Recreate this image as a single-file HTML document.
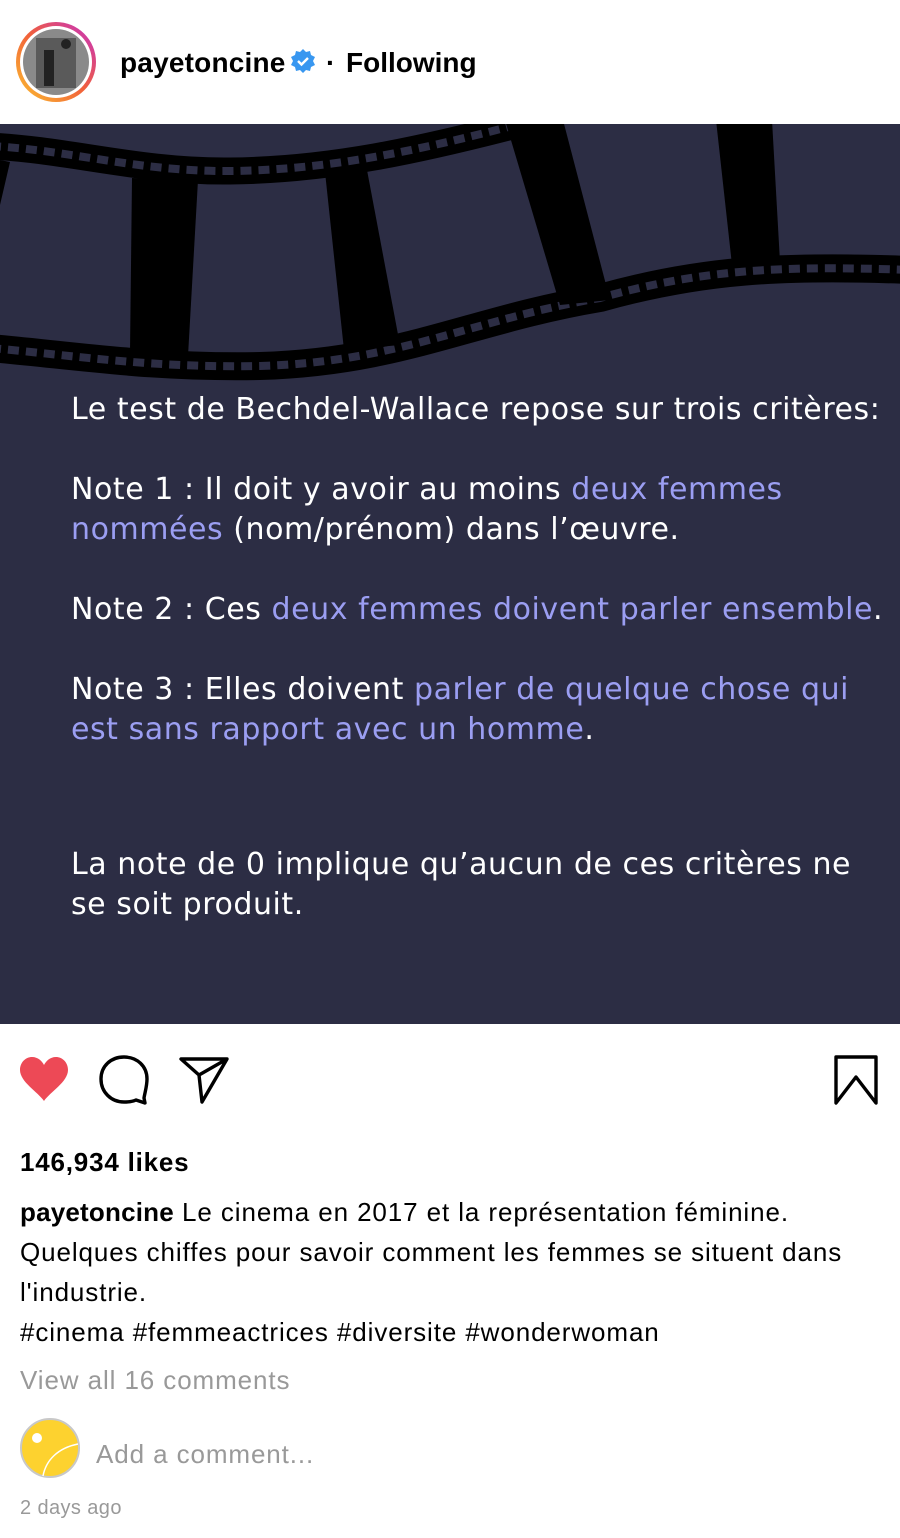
<!DOCTYPE html>
<html><head><meta charset="utf-8"><style>
*{margin:0;padding:0;box-sizing:border-box}
body{width:900px;height:1538px;background:#fff;font-family:"Liberation Sans",Arial,sans-serif;color:#000;position:relative;overflow:hidden}
.a{position:absolute;white-space:nowrap}
.post{position:absolute;left:0;top:124px;width:900px;height:900px;background:#2c2d44}
.pt{position:absolute;left:71px;color:#fff;font-family:"DejaVu Sans","Liberation Sans",sans-serif;font-size:30px;white-space:nowrap;letter-spacing:0.55px}
.hl{color:#9b9ef2}
.cap{font-size:26px;line-height:40px;letter-spacing:0.9px}
</style></head><body>
<svg class="a" style="left:14px;top:20px" width="84" height="84" viewBox="0 0 84 84">
<defs><linearGradient id="g" x1="0" y1="1" x2="1" y2="0"><stop offset="0" stop-color="#fcc22f"/><stop offset=".5" stop-color="#f1603a"/><stop offset="1" stop-color="#c42fc6"/></linearGradient></defs>
<circle cx="42" cy="42" r="40" fill="url(#g)"/><circle cx="42" cy="42" r="36" fill="#fff"/><circle cx="42" cy="42" r="33" fill="#8a8a8a"/>
<rect x="22" y="18" width="40" height="50" fill="#5a5a5a"/><circle cx="52" cy="24" r="5" fill="#222"/><rect x="30" y="30" width="10" height="36" fill="#222"/>
</svg>
<div class="a" style="left:120px;top:47px;font-size:28px;font-weight:bold;letter-spacing:0.2px">payetoncine</div>
<svg class="a" style="left:290px;top:48px" width="26" height="26" viewBox="0 0 26 26"><path d="M13 1l3 3 4-1 1 4 4 2-2 4 2 4-4 2-1 4-4-1-3 3-3-3-4 1-1-4-4-2 2-4-2-4 4-2 1-4 4 1z" fill="#3897f0"/><path d="M8 13l3.5 3.5L18 10" stroke="#fff" stroke-width="2.4" fill="none"/></svg>
<div class="a" style="left:326px;top:47px;font-size:28px;font-weight:bold">·</div>
<div class="a" style="left:346px;top:47px;font-size:28px;font-weight:bold">Following</div>

<div class="post">
<svg width="900" height="300" style="position:absolute;left:0;top:0" viewBox="0 124 900 300">
<g fill="none" stroke-linejoin="round">
<path d="M-10 146 C70 150 140 172 230 171 C330 170 420 150 520 124 L590 100" stroke="#000" stroke-width="27"/>
<path d="M-10 146 C70 150 140 172 230 171 C330 170 420 150 520 124 L590 100" stroke="#2c2d44" stroke-width="8" stroke-dasharray="11 7"/>
<path d="M-10 348 C80 356 150 368 260 366 C400 362 470 320 600 298 C700 270 780 265 910 270" stroke="#000" stroke-width="28"/>
<path d="M-10 348 C80 356 150 368 260 366 C400 362 470 320 600 298 C700 270 780 265 910 270" stroke="#2c2d44" stroke-width="8" stroke-dasharray="11 7"/>
</g>
<polygon points="132,178 198,180 188,356 130,352" fill="#000"/>
<polygon points="325,172 367,170 400,345 344,350" fill="#000"/>
<polygon points="505,120 563,120 610,300 560,305" fill="#000"/>
<polygon points="716,120 772,120 780,262 732,265" fill="#000"/>
<polygon points="0,160 10,162 0,205" fill="#000"/>
</svg>
<div class="pt" style="top:268px">Le test de Bechdel-Wallace repose sur trois critères:</div>
<div class="pt" style="top:348px">Note 1 : Il doit y avoir au moins <span class="hl">deux femmes</span></div>
<div class="pt" style="top:388px"><span class="hl">nommées</span> (nom/prénom) dans l’œuvre.</div>
<div class="pt" style="top:468px">Note 2 : Ces <span class="hl">deux femmes doivent parler ensemble</span>.</div>
<div class="pt" style="top:548px">Note 3 : Elles doivent <span class="hl">parler de quelque chose qui</span></div>
<div class="pt" style="top:588px"><span class="hl">est sans rapport avec un homme</span>.</div>
<div class="pt" style="top:723px">La note de 0 implique qu’aucun de ces critères ne</div>
<div class="pt" style="top:763px">se soit produit.</div>
</div>

<svg class="a" style="left:18px;top:1056px" width="52" height="48" viewBox="0 0 52 48"><path d="M26 45 C20 36 2 26 2 14 C2 6 8 1 14 1 C20 1 24 5 26 9 C28 5 32 1 38 1 C44 1 50 6 50 14 C50 26 32 36 26 45Z" fill="#ed4956"/></svg>
<svg class="a" style="left:98px;top:1054px" width="54" height="52" viewBox="0 0 54 52"><path d="M46 44 L47 49 L38 46 C34 48 30 48 26 48 C13 48 3 38 3 25 C3 12 13 3 26 3 C39 3 49 12 49 25 C49 32 47 38 46 44Z" fill="none" stroke="#000" stroke-width="3.4" stroke-linejoin="round"/></svg>
<svg class="a" style="left:178px;top:1056px" width="52" height="48" viewBox="0 0 52 48"><path d="M3 3 L49 3 L24 46 L21 19Z M21 19 L49 3" fill="none" stroke="#000" stroke-width="3.4" stroke-linejoin="round"/></svg>
<svg class="a" style="left:832px;top:1054px" width="48" height="52" viewBox="0 0 48 52"><path d="M4 49 L4 3 L44 3 L44 49 L24 23Z" fill="none" stroke="#000" stroke-width="3.4" stroke-linejoin="round"/></svg>

<div class="a" style="left:20px;top:1147px;font-size:26px;font-weight:bold;letter-spacing:0.8px">146,934 likes</div>
<div class="a cap" style="left:20px;top:1192px"><b style="letter-spacing:0.2px">payetoncine</b> Le cinema en 2017 et la représentation féminine.</div>
<div class="a cap" style="left:20px;top:1232px">Quelques chiffes pour savoir comment les femmes se situent dans</div>
<div class="a cap" style="left:20px;top:1272px">l'industrie.</div>
<div class="a cap" style="left:20px;top:1312px">#cinema #femmeactrices #diversite #wonderwoman</div>
<div class="a cap" style="left:20px;top:1360px;color:#999">View all 16 comments</div>
<svg class="a" style="left:20px;top:1418px" width="62" height="62" viewBox="0 0 62 62"><circle cx="30" cy="30" r="29" fill="#fdd22f" stroke="#c8c8c8" stroke-width="2"/><circle cx="17" cy="20" r="5" fill="#fff"/><path d="M23 58 C26 42 38 30 58 26" fill="none" stroke="#fff" stroke-width="1.5"/></svg>
<div class="a cap" style="left:96px;top:1434px;color:#999">Add a comment...</div>
<div class="a" style="left:20px;top:1497px;font-size:20px;color:#999;letter-spacing:0.4px">2 days ago</div>
</body></html>
